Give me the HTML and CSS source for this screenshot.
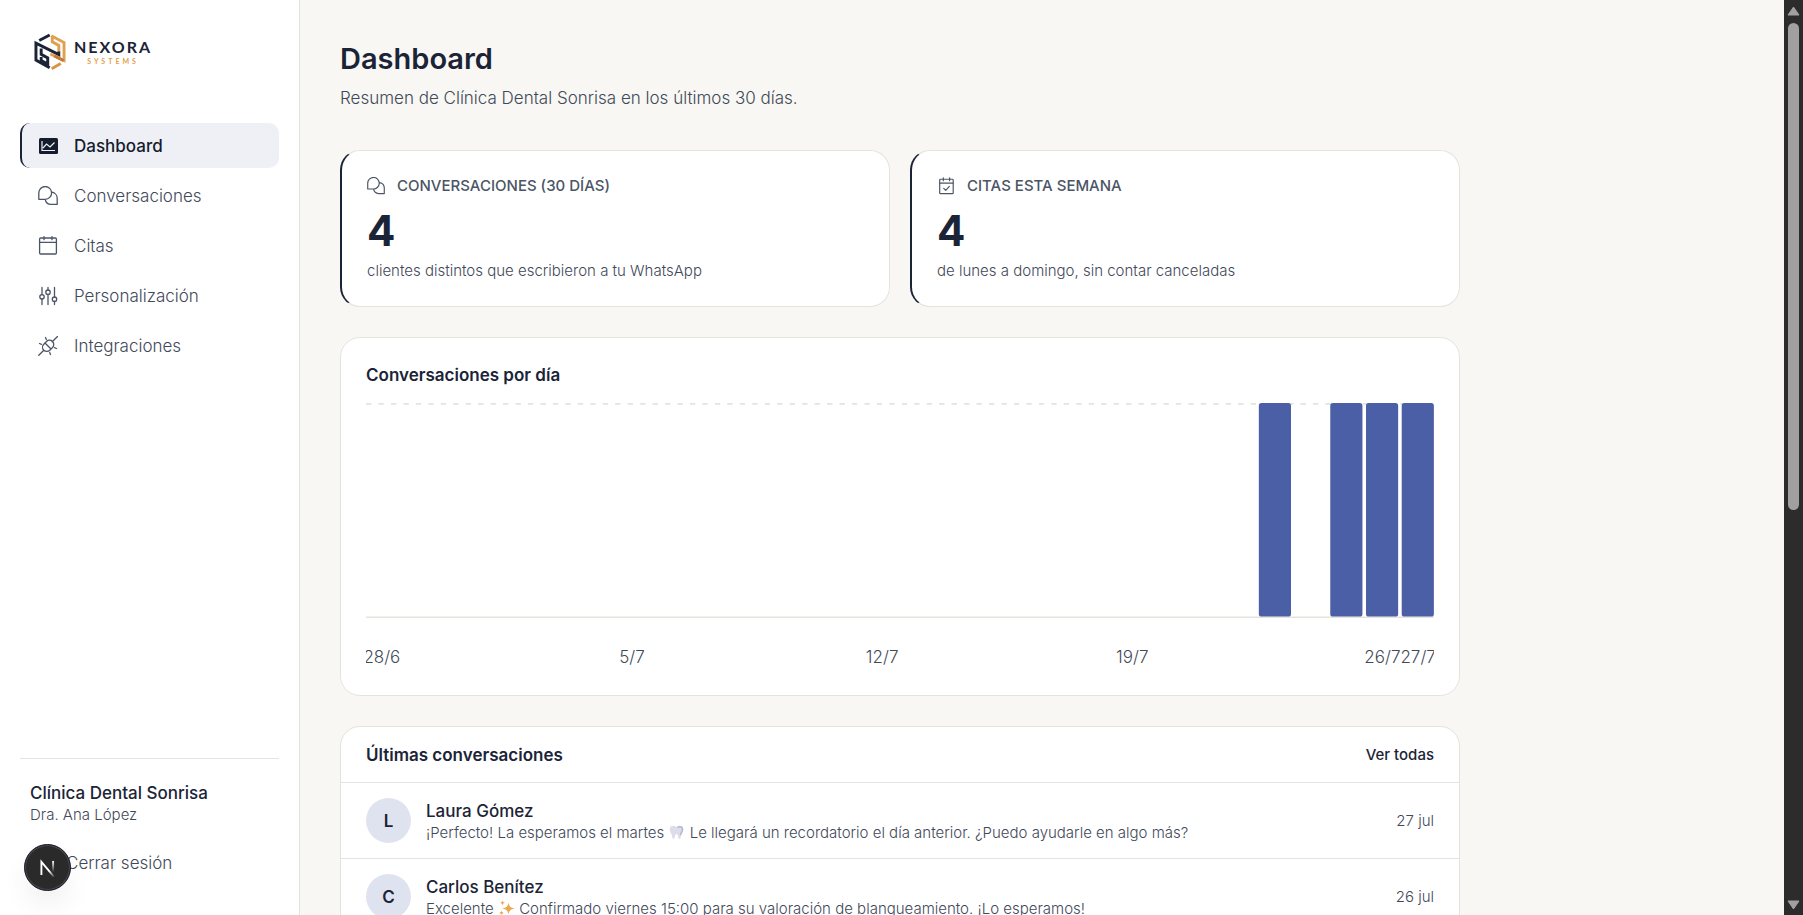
FILE: index.html
```html
<!DOCTYPE html>
<html lang="es">
<head>
<meta charset="utf-8">
<meta name="viewport" content="width=device-width, initial-scale=1">
<title>Dashboard · Nexora Systems</title>
<link rel="stylesheet" href="styles.css">
</head>
<body>
<div class="app">
  <aside class="sidebar">
    <a class="brand" href="#">
      <svg class="brand-mark" viewBox="0 0 98 114" aria-hidden="true" fill="none" stroke-width="9">
        <g stroke="#1b2437">
          <path d="M16 22 48 5"/>
          <path d="M48 105 6 82V30l70 35v-10"/>
          <path d="M22 46v18l20 11v19L22 83V72"/>
        </g>
        <g stroke="#dfa150">
          <path d="M53 7 92 28v55L50 63"/>
          <path d="M56 8v18l20 11v18"/>
          <path d="M54 108 82 92" stroke="#d99442"/>
          <path d="M91 84 62 69" stroke="#c47a35"/>
        </g>
      </svg>
      <span class="brand-text"><span class="brand-name">NEXORA</span><span class="brand-sub">SYSTEMS</span></span>
    </a>
    <nav class="nav">
      <a class="nav-item active" href="#">
        <svg class="icon" viewBox="0 0 20 20" aria-hidden="true"><rect x="1" y="2" width="19" height="16" rx="1.500" fill="#151c2e"/><path d="M4 5v9.500h13M5 12l3.500-4 3.500 3 4.500-4.500" fill="none" stroke="#eff0f6" stroke-width="1.200"/></svg>
        Dashboard
      </a>
      <a class="nav-item" href="#">
        <svg class="icon line" viewBox="0 0 20 20" aria-hidden="true"><path d="M.8 13.300V7a6.400 6.400 0 1 1 6.400 6.300zM14 6.200a6.200 6.200 0 0 1 5.200 6.100v6.100h-6.100a6.200 6.200 0 0 1-5.900-5.100"/></svg>
        Conversaciones
      </a>
      <a class="nav-item" href="#">
        <svg class="icon line" viewBox="0 0 20 20" aria-hidden="true"><rect x="1.600" y="2" width="16.800" height="16" rx="1"/><path d="M1.600 6.300h16.800M6 .7v3M14 .7v3"/></svg>
        Citas
      </a>
      <a class="nav-item" href="#">
        <svg class="icon line" viewBox="0 0 20 20" aria-hidden="true"><path d="M4 1.500v7M4 13v5.500M10 1.500V4M10 8.500v10M16.500 1.500v9.500M16.500 15.500v3"/><circle cx="4" cy="10.800" r="2.200"/><circle cx="10" cy="6.200" r="2.200"/><circle cx="16.500" cy="13.200" r="2.200"/></svg>
        Personalización
      </a>
      <a class="nav-item" href="#">
        <svg class="icon line" viewBox="0 0 20 20" aria-hidden="true"><path d="M.8 19.200 5.800 14.200M14.200 5.800 19.500.5M7 7l6 6M5.800 8.200 8.500 5.500a4 4 0 0 1 6 6l-2.700 2.700M5.800 8.200a4 4 0 0 0 6 6M7.500 1.500l.8 2M1.500 7.500l2 .8M12.500 18.500l-.8-2M18.500 12.500l-2-.8"/></svg>
        Integraciones
      </a>
    </nav>
    <div class="account">
      <div class="account-name">Clínica Dental Sonrisa</div>
      <div class="account-user">Dra. Ana López</div>
      <button class="logout" type="button">Cerrar sesión</button>
    </div>
  </aside>

  <main class="main">
    <div class="content">
      <header class="page-head">
        <h1>Dashboard</h1>
        <p>Resumen de Clínica Dental Sonrisa en los últimos 30 días.</p>
      </header>

      <section class="stats">
        <article class="card stat">
          <h2 class="stat-label">
            <svg class="icon-small line" viewBox="0 0 20 20" aria-hidden="true"><path d="M.8 13.300V7a6.400 6.400 0 1 1 6.400 6.300zM14 6.200a6.200 6.200 0 0 1 5.200 6.100v6.100h-6.100a6.200 6.200 0 0 1-5.900-5.100"/></svg>
            CONVERSACIONES (30 DÍAS)
          </h2>
          <div class="stat-value">4</div>
          <p class="stat-note">clientes distintos que escribieron a tu WhatsApp</p>
        </article>
        <article class="card stat">
          <h2 class="stat-label">
            <svg class="icon-small line" viewBox="0 0 20 20" aria-hidden="true"><rect x="3" y="2.500" width="15" height="16" rx=".8"/><path d="M3 6.800h15M7 .8v3.400M14 .8v3.400M7.500 12.600l2.200 2.200 4-4.400"/></svg>
            CITAS ESTA SEMANA
          </h2>
          <div class="stat-value">4</div>
          <p class="stat-note">de lunes a domingo, sin contar canceladas</p>
        </article>
      </section>

      <section class="card chart">
        <h2 class="card-title">Conversaciones por día</h2>
        <svg class="plot" viewBox="0 0 600 121" role="img" aria-label="Conversaciones por día">
          <path d="M0 .5h600" stroke="#e4e4de" stroke-dasharray="3 4"/>
          <path d="M0 120.500h600" stroke="#e4e4de"/>
          <g fill="#4a5fa5">
            <rect x="501.600" width="18.070" height="120" rx="1.500"/>
            <rect x="541.730" width="18.070" height="120" rx="1.500"/>
            <rect x="561.800" width="18.070" height="120" rx="1.500"/>
            <rect x="581.870" width="18.070" height="120" rx="1.500"/>
          </g>
        </svg>
        <div class="axis">
          <span class="tick d1">28/6</span>
          <span class="tick d8">5/7</span>
          <span class="tick d15">12/7</span>
          <span class="tick d22">19/7</span>
          <span class="tick d29">26/7</span>
          <span class="tick d30">27/7</span>
        </div>
      </section>

      <section class="card recent">
        <header class="recent-head">
          <h2 class="card-title">Últimas conversaciones</h2>
          <a class="see-all" href="#">Ver todas</a>
        </header>
        <ul class="list">
          <li class="row">
            <span class="avatar">L</span>
            <div class="row-body">
              <div class="row-name">Laura Gómez</div>
              <div class="row-text">¡Perfecto! La esperamos el martes <svg class="emoji" viewBox="0 0 16 16" role="img" aria-label="diente"><path d="M8 3C5.500 1 1.500 1.500 1.200 5c-.2 2.500 1.600 4 2 6 .3 1.600.8 4 2 4 1.300 0 1-5 2.800-5s1.500 5 2.800 5c1.200 0 1.700-2.400 2-4 .4-2 2.200-3.500 2-6C14.500 1.500 10.500 1 8 3z" fill="#dcdde8"/><path d="M9 3.500c2-1.500 5-1 5 2 0 2-1.500 3-2 5.500" fill="none" stroke="#b5b8cb" stroke-width="1.500"/></svg> Le llegará un recordatorio el día anterior. ¿Puedo ayudarle en algo más?</div>
            </div>
            <time class="row-date">27 jul</time>
          </li>
          <li class="row">
            <span class="avatar">C</span>
            <div class="row-body">
              <div class="row-name">Carlos Benítez</div>
              <div class="row-text">Excelente <svg class="emoji" viewBox="0 0 16 16" role="img" aria-label="destellos"><path d="M10 2.500c.8 4 1.800 5 6 6-4.200 1-5.200 2-6 6-.8-4-1.800-5-6-6 4.200-1 5.200-2 6-6zM4 0c.3 1.800.8 2.400 2.600 2.800C4.800 3.200 4.300 3.800 4 5.600 3.700 3.800 3.200 3.200 1.400 2.800 3.200 2.400 3.700 1.800 4 0zM3 10.500c.3 1.500.8 2 2.400 2.400C3.800 13.300 3.300 13.800 3 15.300c-.3-1.500-.8-2-2.400-2.400C2.200 12.500 2.700 12 3 10.500z" fill="#e8a94f"/></svg> Confirmado viernes 15:00 para su valoración de blanqueamiento. ¡Lo esperamos!</div>
            </div>
            <time class="row-date">26 jul</time>
          </li>
        </ul>
      </section>
    </div>
  </main>

  <div class="scrollbar" aria-hidden="true">
    <svg class="arrow" viewBox="0 0 13 10"><path d="M6.500 1 12 9H1z" fill="#a0a0a0" stroke="#a0a0a0" stroke-linejoin="round"/></svg>
    <div class="track"><div class="thumb"></div></div>
    <svg class="arrow" viewBox="0 0 13 10"><path d="M6.500 9 12 1H1z" fill="#a0a0a0" stroke="#a0a0a0" stroke-linejoin="round"/></svg>
  </div>
</div>

<button class="dev-badge" type="button" aria-label="Herramientas de desarrollo">
  <svg viewBox="0 0 48 48" aria-hidden="true">
    <defs>
      <linearGradient id="stem" x1="0" y1="0" x2="0" y2="1"><stop offset="0" stop-color="#fff"/><stop offset="1" stop-color="#fff" stop-opacity="0"/></linearGradient>
      <linearGradient id="diag" x1="0" y1="0" x2="1" y2="1"><stop offset=".6" stop-color="#fff"/><stop offset="1" stop-color="#fff" stop-opacity=".1"/></linearGradient>
    </defs>
    <path d="M17.500 32V18l13.500 16" fill="none" stroke="url(#diag)" stroke-width="2"/>
    <rect x="29" y="17" width="2" height="12" fill="url(#stem)"/>
  </svg>
</button>
</body>
</html>
```

FILE: styles.css
```css
* { box-sizing: border-box; }

body {
  margin: 0;
  font-family: Inter, "Liberation Sans", sans-serif;
  font-size: 17px;
  line-height: 24px;
  color: #1b2437;
  background: #f8f7f3;
}

h1, h2, p, ul { margin: 0; padding: 0; }
a { color: inherit; text-decoration: none; }
button { font: inherit; border: 0; cursor: pointer; }

.app {
  display: grid;
  grid-template-columns: 300px 1fr 19px;
  height: 100vh;
  overflow: hidden;
}

/* Sidebar */
.sidebar {
  display: flex;
  flex-direction: column;
  padding: 33px 20px 30px;
  background: #fff;
  border-right: 1px solid #e4e4de;
}

.brand {
  display: flex;
  align-items: center;
  gap: 8px;
  padding-left: 14px;
  margin-bottom: 52px;
}
.brand-mark { width: 32px; height: 38px; }
.brand-text { display: flex; flex-direction: column; align-items: center; gap: 3px; }
.brand-name { font: 700 16px/14px Lato, sans-serif; letter-spacing: 2px; }
.brand-sub { font: 700 7px/8px Lato, sans-serif; letter-spacing: 3px; color: #dfa150; }

.nav { display: flex; flex-direction: column; gap: 5px; }
.nav-item {
  display: flex;
  align-items: center;
  gap: 16px;
  height: 45px;
  padding-left: 16px;
  font-weight: 300;
  color: #3f4959;
  border-left: 2px solid transparent;
  border-radius: 10px;
}
.nav-item.active { color: #151c2e; font-weight: 500; background: #eff0f6; border-left-color: #1b2437; }
.icon { width: 20px; height: 20px; }
.icon-small { width: 18px; height: 18px; }
.line { fill: none; stroke: #4b5565; stroke-width: 1.3; stroke-linecap: round; stroke-linejoin: round; }

.account {
  margin-top: auto;
  padding: 22px 10px 0;
  border-top: 1px solid #e4e4de;
}
.account-name { font-weight: 500; }
.account-user { font-size: 15px; line-height: 20px; font-weight: 300; color: #3f4959; }
.logout {
  display: block;
  margin-top: 16px;
  padding: 10px 0 10px 36px;
  font-weight: 300;
  color: #3f4959;
  background: none;
}

/* Main */
.main { padding: 40px; overflow: hidden; }
.content { display: flex; flex-direction: column; gap: 30px; max-width: 1120px; }

.page-head { padding-bottom: 10px; }
.page-head h1 { font-size: 29px; line-height: 38px; font-weight: 600; }
.page-head p { margin-top: 8px; font-weight: 300; color: #3f4959; }

.card { background: #fff; border: 1px solid #e4e4de; border-radius: 20px; }
.card-title { font-size: 17px; line-height: 24px; font-weight: 600; }

.stats { display: grid; grid-template-columns: 1fr 1fr; gap: 20px; }
.stat { padding: 24px 25px; border-left: 2px solid #1b2437; }
.stat-label {
  display: flex;
  align-items: center;
  gap: 12px;
  font-size: 15px;
  line-height: 22px;
  font-weight: 500;
  color: #4b5565;
}
.stat-value { margin-top: 10px; font-size: 42px; line-height: 48px; font-weight: 700; }
.stat-note { margin-top: 5px; font-size: 15px; line-height: 22px; font-weight: 300; color: #3f4959; }

.chart { padding: 25px 25px 26px; }
.plot { display: block; width: 100%; margin-top: 16px; }
.axis {
  display: grid;
  grid-template-columns: repeat(30, minmax(0, 1fr));
  gap: 4px;
  margin-top: 27px;
  overflow: hidden;
  font-weight: 300;
  color: #3f4959;
}
.tick { grid-row: 1; justify-self: center; }
.d1 { grid-column: 1; }
.d8 { grid-column: 8; }
.d15 { grid-column: 15; }
.d22 { grid-column: 22; }
.d29 { grid-column: 29; }
.d30 { grid-column: 30; }

.recent-head {
  display: flex;
  align-items: center;
  justify-content: space-between;
  height: 55px;
  padding: 0 25px;
}
.see-all { font-size: 15px; font-weight: 500; }
.list { list-style: none; }
.row {
  display: flex;
  align-items: center;
  gap: 15px;
  padding: 15px 25px;
  border-top: 1px solid #e4e4de;
}
.avatar {
  display: grid;
  place-items: center;
  width: 45px;
  height: 45px;
  border-radius: 50%;
  font-weight: 600;
  background: #dfe3ef;
}
.row-body { flex: 1; min-width: 0; }
.row-name { font-weight: 500; line-height: 24px; }
.row-text { font-size: 15px; line-height: 20px; font-weight: 300; color: #3f4959; white-space: nowrap; overflow: hidden; text-overflow: ellipsis; }
.emoji { width: 17px; height: 16px; vertical-align: -2px; }
.row-date { font-size: 15px; font-weight: 300; color: #3f4959; }

/* Scrollbar */
.scrollbar {
  display: flex;
  flex-direction: column;
  align-items: center;
  gap: 7px;
  padding: 6px 4px 5px 3px;
  background: #2c2c2c;
}
.arrow { width: 13px; height: 10px; }
.track { flex: 1; width: 11px; }
.thumb { height: 56%; border-radius: 6px; background: #a0a0a0; }

/* Floating developer badge */
.dev-badge {
  position: fixed;
  left: 24px;
  bottom: 24px;
  width: 47px;
  height: 47px;
  padding: 0;
  border-radius: 50%;
  background: #2a2a2a;
  border: 1px solid #14182a;
  box-shadow: inset 0 0 0 1px #4a4a52, 0 16px 32px -8px rgba(0, 0, 0, .12);
}
.dev-badge svg { display: block; width: 100%; }
```
